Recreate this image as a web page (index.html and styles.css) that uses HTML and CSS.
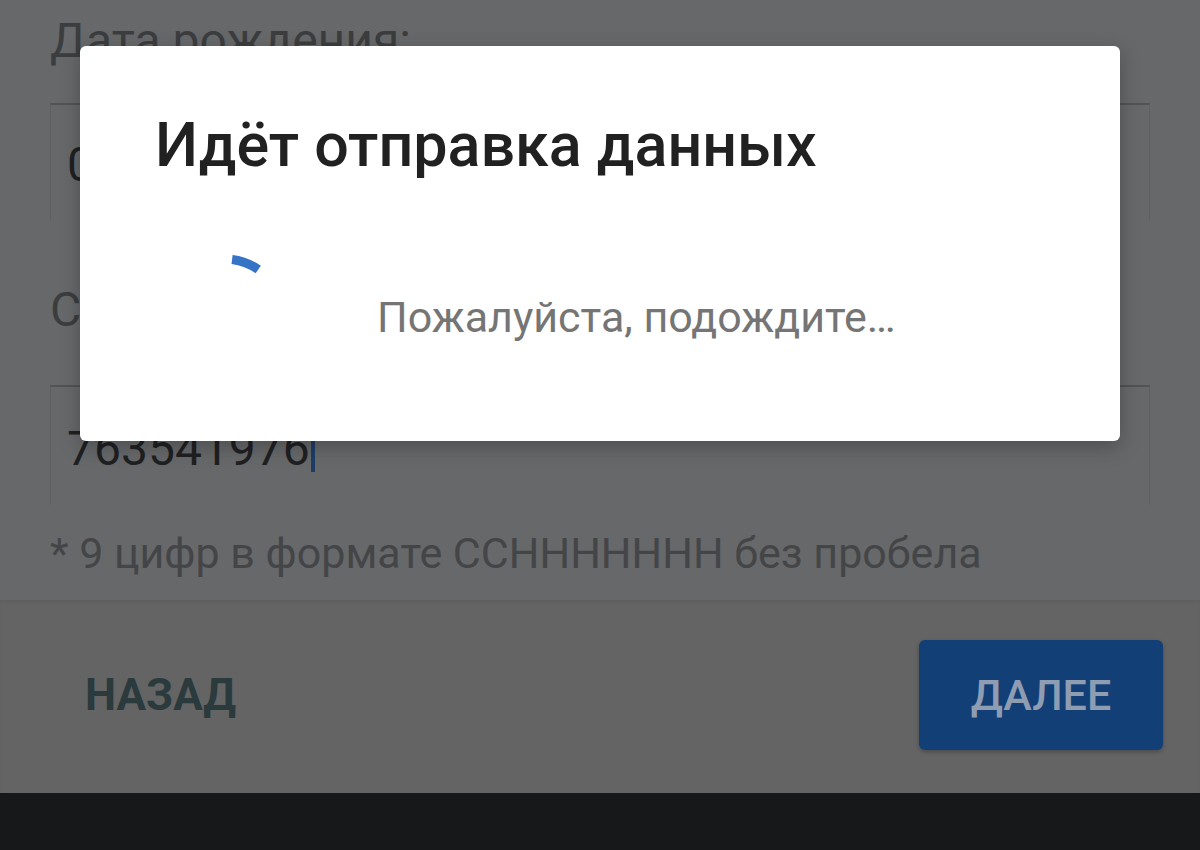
FILE: index.html
```html
<!DOCTYPE html>
<html lang="ru">
<head>
    <meta charset="utf-8">
    <meta name="viewport" content="width=device-width, initial-scale=1.0">
    <title>Паспортные данные</title>
    <link rel="stylesheet" href="styles.css">
</head>
<body>
    <div class="screen">
        <!-- форма под затемнением -->
        <div class="form">
            <div class="field-label">Дата рождения:</div>
            <div class="field">
                <span class="field-value">01.01.1980</span>
            </div>

            <div class="field-label field-label-second">Серия и номер паспорта:</div>
            <div class="field field-active">
                <span class="field-value">763541976</span><span class="caret"></span>
            </div>
            <div class="field-hint">* 9 цифр в формате ССННННННН без пробела</div>
        </div>

        <div class="actions">
            <button class="btn-text">НАЗАД</button>
            <button class="btn-primary">ДАЛЕЕ</button>
        </div>

        <div class="nav-bar"></div>

        <!-- диалог отправки -->
        <div class="dialog">
            <div class="dialog-title">Идёт отправка данных</div>
            <div class="dialog-body">
                <svg class="spinner" width="130" height="130" viewBox="0 0 130 130">
                    <path d="M72.07 7.43 A58 58 0 0 1 98.27 17.49" fill="none" stroke="#3673c6" stroke-width="9"/>
                </svg>
                <div class="dialog-message">Пожалуйста, подождите…</div>
            </div>
        </div>
    </div>
</body>
</html>
```

FILE: styles.css
```css
* {
    box-sizing: border-box;
}

body {
    margin: 0;
    font-family: Roboto, "Noto Sans", Arial, sans-serif;
    background-color: #17181a;
}

.screen {
    position: relative;
    width: 1200px;
    height: 850px;
    display: flex;
    flex-direction: column;
    overflow: hidden;
}

/* Форма (затемнена модальным окном) */
.form {
    height: 600px;
    padding: 12px 50px 0;
    background-color: #67686a;
}

.field-label {
    font-size: 48px;
    line-height: 58px;
    color: #3c3d3f;
    margin-bottom: 33px;
}

.field-label-second {
    margin-bottom: 46px;
}

.field {
    display: flex;
    align-items: center;
    height: 117px;
    padding: 4px 16px 0;
    border-top: 2px solid #525355;
    border-left: 1px solid #5f6062;
    border-right: 1px solid #5f6062;
    margin-bottom: 61px;
}

.field-active {
    height: 120px;
    margin-bottom: 22px;
}

.field-value {
    font-size: 48px;
    line-height: 57px;
    color: #1f2022;
}

.caret {
    display: inline-block;
    width: 4px;
    height: 36px;
    margin-top: 12px;
    margin-left: 1px;
    background-color: #1d3d68;
}

.field-hint {
    font-size: 43px;
    line-height: 52px;
    color: #444547;
}

/* Кнопки навигации */
.actions {
    height: 193px;
    display: flex;
    align-items: center;
    justify-content: space-between;
    padding: 0 37px 4px 50px;
    background-color: #646464;
    box-shadow: inset 0 2px 3px rgba(0, 0, 0, 0.05);
}

.btn-text {
    padding: 0 35px;
    border: none;
    background: none;
    font-family: inherit;
    font-size: 44px;
    font-weight: 700;
    color: #2b3a3c;
}

.btn-primary {
    width: 244px;
    height: 110px;
    border: none;
    border-radius: 6px;
    background-color: #133f77;
    box-shadow: 0 2px 4px rgba(0, 0, 0, 0.25);
    font-family: inherit;
    font-size: 43px;
    font-weight: 500;
    color: #8e9db2;
}

.nav-bar {
    height: 57px;
    background-color: #17181a;
}

/* Модальное окно */
.dialog {
    position: absolute;
    left: 80px;
    top: 46px;
    width: 1040px;
    padding: 64px 75px 59px;
    background-color: #fff;
    border-radius: 6px;
    box-shadow: 0 6px 20px rgba(0, 0, 0, 0.25);
}

.dialog-title {
    font-size: 61px;
    font-weight: 500;
    line-height: 70px;
    color: #212121;
}

.dialog-body {
    display: flex;
    align-items: center;
    margin-top: 72px;
}

.spinner {
    flex: none;
    margin-left: 5px;
}

.dialog-message {
    margin-left: 87px;
    font-size: 43px;
    color: #757575;
}
```
